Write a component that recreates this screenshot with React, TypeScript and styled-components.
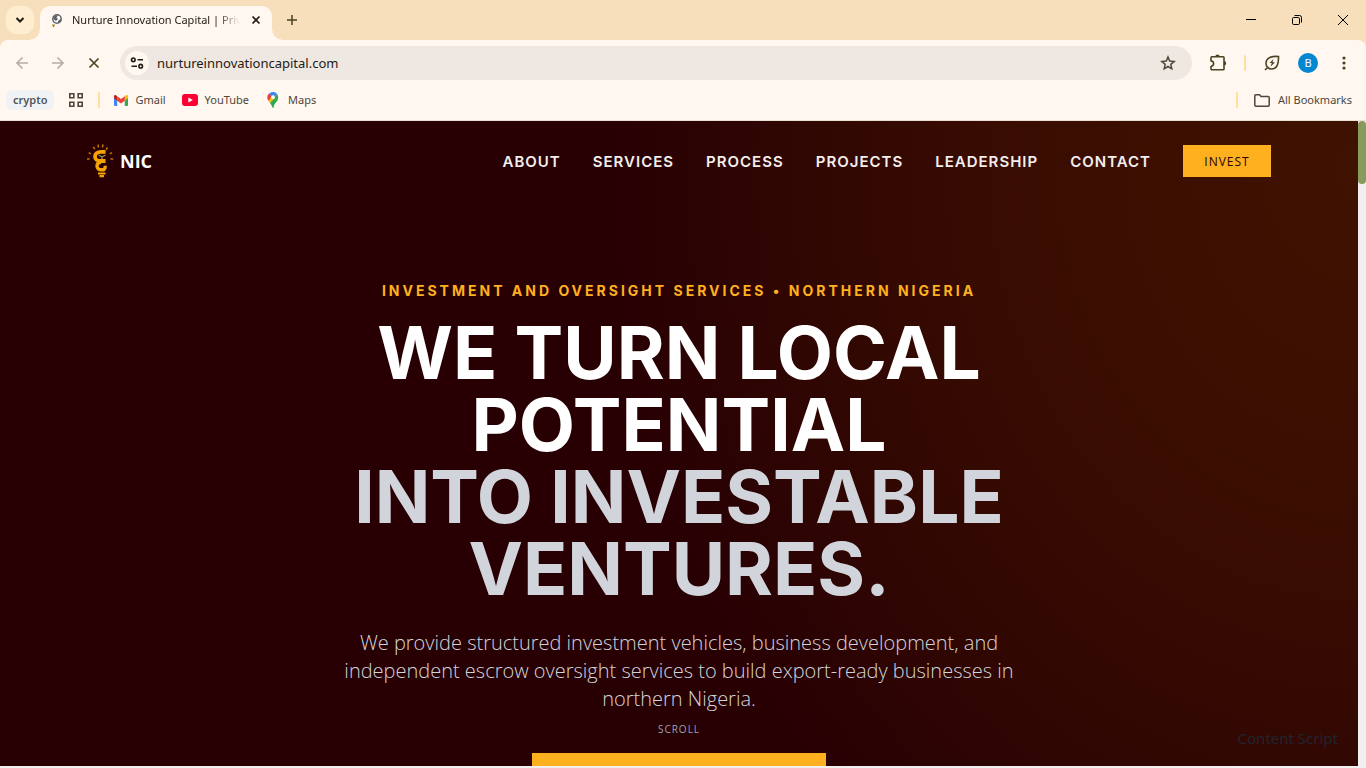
import React from "react";
import styled, { createGlobalStyle } from "styled-components";

const ui = `"Noto Sans", "Open Sans", sans-serif`;
const body = `"Open Sans", "Noto Sans", sans-serif`;
const display = `Inter, "Liberation Sans", sans-serif`;
const amber = "#ffb01f";

const GlobalStyle = createGlobalStyle`
  * { box-sizing: border-box; }
  html, body, #root { height: 100%; margin: 0; }
  body { overflow: hidden; font-family: ${ui}; font-size: 11px; }
  button, input { font: inherit; color: inherit; border: 0; padding: 0; margin: 0; background: none; }
  a { color: inherit; text-decoration: none; }
  svg { display: block; flex: none; }
`;

const Window = styled.div`
  height: 100vh;
  display: flex;
  flex-direction: column;
  background: #f6dfba;
`;

const TabStrip = styled.div`
  flex: none;
  height: 40px;
  display: flex;
  align-items: flex-end;
  padding-left: 6px;
`;

const TabSearch = styled.button`
  width: 28px;
  height: 28px;
  margin: 0 6px 6px 0;
  border-radius: 10px;
  background: #ffedd0;
  display: grid;
  place-items: center;
`;

const Tab = styled.div`
  position: relative;
  width: 232px;
  height: 34px;
  padding: 0 10px 6px;
  border-radius: 10px 10px 0 0;
  background: #fff7f0;
  display: flex;
  align-items: center;
  &::before, &::after {
    content: "";
    position: absolute;
    bottom: 0;
    width: 10px;
    height: 10px;
  }
  &::before { right: 100%; background: radial-gradient(circle at 0 0, transparent 9px, #fff7f0 10px); }
  &::after { left: 100%; background: radial-gradient(circle at 100% 0, transparent 9px, #fff7f0 10px); }
`;

const TabTitle = styled.span`
  flex: 1;
  margin: 0 8px;
  overflow: hidden;
  white-space: nowrap;
  font-size: 11px;
  line-height: 20px;
  color: #1f1b16;
  mask-image: linear-gradient(to right, #000 145px, transparent 168px);
`;

const PlainButton = styled.button<{ $w?: number; $h?: number }>`
  flex: none;
  width: ${(p) => p.$w ?? 36}px;
  height: ${(p) => p.$h ?? 34}px;
  display: grid;
  place-items: center;
`;

const NewTab = styled(PlainButton)`
  margin: 0 auto 3px 2px;
`;

const ToolArea = styled.div`
  flex: none;
  background: #fff7f0;
  border-radius: 8px 8px 0 0;
  border-bottom: 1px solid #eadfd4;
`;

const Toolbar = styled.div`
  height: 46px;
  display: flex;
  align-items: center;
  padding: 0 4px;
`;

const Omnibox = styled.form`
  flex: 1;
  height: 34px;
  margin: 0 8px;
  padding: 0 6px 0 5px;
  border-radius: 17px;
  background: #efe7e1;
  display: flex;
  align-items: center;
`;

const SiteInfo = styled.button`
  width: 24px;
  height: 24px;
  border-radius: 50%;
  background: #fff7f0;
  display: grid;
  place-items: center;
`;

const Address = styled.input`
  flex: 1;
  min-width: 0;
  margin-left: 8px;
  font-family: ${ui};
  font-size: 13px;
  line-height: 20px;
  color: #1f1b16;
  outline: 0;
`;

const Divider = styled.span<{ $gap: number }>`
  width: 2px;
  height: 16px;
  margin: 0 ${(p) => p.$gap}px;
  border-radius: 1px;
  background: #ffdf9c;
`;

const Avatar = styled.span`
  width: 20px;
  height: 20px;
  border-radius: 50%;
  background: #0288d1;
  color: #fff;
  font-size: 11px;
  line-height: 20px;
  text-align: center;
`;

const Bookmarks = styled.nav`
  height: 34px;
  padding: 0 14px 6px 6px;
  display: flex;
  align-items: center;
  color: #4d4639;
`;

const Group = styled.button`
  height: 20px;
  padding: 0 7px;
  margin-right: 14px;
  border-radius: 6px;
  background: #f0f2f4;
  color: #50565c;
  font-size: 11px;
  font-weight: 600;
  line-height: 20px;
`;

const Bookmark = styled.a`
  display: flex;
  align-items: center;
  gap: 7px;
  margin-right: 16px;
  line-height: 20px;
`;

const Folder = styled(Bookmark).attrs({ as: "button" })`
  margin: 0;
  gap: 8px;
`;

const Fill = styled.span`
  flex: 1;
`;

const Viewport = styled.div`
  flex: 1;
  min-height: 0;
  display: flex;
  padding-bottom: 2px;
  background: #f0f0f0;
`;

const Page = styled.div`
  position: relative;
  flex: 1;
  min-width: 0;
  overflow: hidden;
  background: radial-gradient(ellipse 760px 880px at 100% 8%, #401200 0%, #390c02 48%, #2f0602 76%, #280004 100%);
  font-family: ${body};
`;

const Track = styled.div`
  flex: none;
  width: 8px;
`;

const Thumb = styled.div`
  height: 63px;
  border-radius: 4px;
  background: #889b5c;
`;

const Header = styled.header`
  max-width: 1280px;
  height: 80px;
  margin: 0 auto;
  padding: 0 48px;
  display: flex;
  align-items: center;
  justify-content: space-between;
`;

const Brand = styled.a`
  display: flex;
  align-items: center;
  gap: 6px;
  color: #fff;
  font-size: 18px;
  font-weight: 700;
  line-height: 28px;
`;

const Menu = styled.nav`
  display: flex;
  align-items: center;
  gap: 32px;
  font-family: ${display};
  font-size: 15px;
  font-weight: 600;
  letter-spacing: 1px;
  color: #f3eeec;
`;

const Invest = styled.button`
  width: 88px;
  height: 32px;
  background: ${amber};
  color: #280004;
  font-family: ${body};
  font-size: 12px;
  font-weight: 500;
  letter-spacing: 1px;
`;

const Hero = styled.main`
  max-width: 896px;
  margin: 0 auto;
  padding-top: 80px;
  display: flex;
  flex-direction: column;
  align-items: center;
  text-align: center;
`;

const Eyebrow = styled.p`
  margin: 0 0 16px;
  font-family: ${display};
  font-size: 14px;
  font-weight: 700;
  line-height: 20px;
  letter-spacing: 3px;
  color: ${amber};
`;

const Headline = styled.h1`
  margin: 0 0 24px;
  font-family: ${display};
  font-size: 73px;
  font-weight: 700;
  line-height: 72px;
  color: #fff;
`;

const Muted = styled.span`
  color: #d1d5db;
`;

const Lead = styled.p`
  max-width: 672px;
  margin: 0 0 40px;
  font-size: 20px;
  font-weight: 300;
  line-height: 28px;
  color: #d1d5db;
`;

const Cta = styled.button`
  width: 294px;
  height: 56px;
  flex: none;
  background: ${amber};
`;

const ScrollHint = styled.span`
  position: absolute;
  left: 0;
  right: 0;
  bottom: 29px;
  text-align: center;
  font-size: 10px;
  line-height: 16px;
  letter-spacing: 1px;
  color: #9ca3af;
`;

const ScriptTag = styled.span`
  position: absolute;
  right: 20px;
  bottom: 16px;
  font-family: ${ui};
  font-size: 15px;
  line-height: 24px;
  color: #1f2430;
`;

const stroke = (color: string, width = 2) => ({ fill: "none", stroke: color, strokeWidth: width });

const Logo = () => (
  <svg width="27" height="34" viewBox="0 0 27 34" aria-hidden="true">
    <path d="M18.500 7.800H13.800C10.300 7.800 8 10 8 12.500S10 17 13 17H18.500" {...stroke("#f5a300", 3.800)} />
    <path d="M14 18C11.300 18.300 10 20 10 22s1.500 3.800 4.500 3.800h2.200c1.200-.8 1.600-2 1.600-4" {...stroke("#f5a300", 3.400)} />
    <path d="M11 28.500h7.500v2H11zM12.500 31h4.500v2.300h-4.500z" fill="#f5a300" />
    <path d="M15 15v-3M15 13l-3.300-2M15 13l3.500-2" {...stroke("#8b8f5a", 1.400)} />
    <path d="M11 .5l.6 3M16 .5l-.6 3M6.300 3l1.500 2.200M20.600 3.500L19 5.700M1.700 8.700l2.200 1.200M25 8.700l-2.200 1.200M0 15h2.700M23.500 15h2.700" {...stroke("#b97800", 1.500)} />
  </svg>
);

const menu = ["About", "Services", "Process", "Projects", "Leadership", "Contact"];

export default function App() {
  return (
    <Window>
      <GlobalStyle />
      <TabStrip>
        <TabSearch aria-label="Search tabs">
          <svg width="10" height="8" viewBox="0 0 10 8"><path d="M1.500 2l3.500 3.500L8.500 2" {...stroke("#1f1b16")} /></svg>
        </TabSearch>
        <Tab>
          <svg width="14" height="14" viewBox="0 0 14 14">
            <circle cx="7" cy="6" r="4.200" fill="#fff" stroke="#5f6368" strokeWidth="1.500" />
            <path d="M3 5c1-2 3-3 5-2.500L6.500 4.500 8 6 6 8 4.500 7zM8 8l2.500-2 1 .5-1.500 3-2 .5z" fill="#5f6368" />
            <path d="M2 11.500h3L4 14H3z" fill="#a87a10" />
          </svg>
          <TabTitle>Nurture Innovation Capital | Private</TabTitle>
          <PlainButton $w={12} $h={16} aria-label="Close tab">
            <svg width="10" height="10" viewBox="0 0 10 10"><path d="M1.500 1.500l7 7M8.500 1.500l-7 7" {...stroke("#1f1b16", 1.700)} /></svg>
          </PlainButton>
        </Tab>
        <NewTab aria-label="New tab">
          <svg width="12" height="12" viewBox="0 0 12 12"><path d="M6 1v10M1 6h10" {...stroke("#4d4322", 1.500)} /></svg>
        </NewTab>
        <PlainButton $w={46} $h={40} aria-label="Minimize">
          <svg width="10" height="10" viewBox="0 0 10 10"><path d="M0 4.500h10" {...stroke("#000", 1)} /></svg>
        </PlainButton>
        <PlainButton $w={46} $h={40} aria-label="Restore">
          <svg width="10" height="10" viewBox="0 0 10 10"><rect x=".5" y="2.500" width="7" height="7" rx="1.200" {...stroke("#000", 1)} /><path d="M2.500.5h5a2 2 0 0 1 2 2v5" {...stroke("#000", 1)} /></svg>
        </PlainButton>
        <PlainButton $w={46} $h={40} aria-label="Close window">
          <svg width="10" height="10" viewBox="0 0 10 10"><path d="M0 0l10 10M10 0L0 10" {...stroke("#000", 1)} /></svg>
        </PlainButton>
      </TabStrip>
      <ToolArea>
        <Toolbar>
          <PlainButton aria-label="Back">
            <svg width="14" height="14" viewBox="0 0 14 14"><path d="M13 7H2M7.500 1.500L2 7l5.500 5.500" {...stroke("#b5ada4", 1.600)} /></svg>
          </PlainButton>
          <PlainButton aria-label="Forward">
            <svg width="14" height="14" viewBox="0 0 14 14"><path d="M1 7h11M6.500 1.500L12 7l-5.500 5.500" {...stroke("#b5ada4", 1.600)} /></svg>
          </PlainButton>
          <PlainButton aria-label="Stop loading">
            <svg width="12" height="12" viewBox="0 0 12 12"><path d="M1.500 1.500l9 9M10.500 1.500l-9 9" {...stroke("#4d4322", 1.700)} /></svg>
          </PlainButton>
          <Omnibox>
            <SiteInfo type="button" aria-label="View site information">
              <svg width="14" height="12" viewBox="0 0 14 12"><g {...stroke("#1f1b16", 1.600)}><circle cx="3.300" cy="2.800" r="1.800" /><path d="M7.500 2.800H13M1.500 9.200H7" /><circle cx="10.700" cy="9.200" r="1.800" /></g></svg>
            </SiteInfo>
            <Address aria-label="Address and search bar" defaultValue="nurtureinnovationcapital.com" />
            <PlainButton type="button" aria-label="Bookmark this tab">
              <svg width="16" height="16" viewBox="0 0 16 16"><path d="M8 2l1.700 4.100 4.500.4-3.400 2.900 1 4.400L8 11.500l-3.800 2.300 1-4.400L1.800 6.500l4.500-.4z" {...stroke("#4d4639", 1.500)} /></svg>
            </PlainButton>
          </Omnibox>
          <PlainButton aria-label="Extensions">
            <svg width="18" height="18" viewBox="0 0 18 18"><path d="M2 7.500V3.500q0-.8.8-.8H14.200q.8 0 .8.800V15q0 .8-.8.8H2.800q-.8 0-.8-.8v-3" {...stroke("#4d4322", 1.600)} /><path d="M2 7a2.500 2.500 0 0 1 0 5.200" {...stroke("#4d4322", 1.600)} /><path d="M6.300 2.700a2.200 2.200 0 0 1 4.400 0zM15 7a2.200 2.200 0 0 1 0 4.400z" fill="#4d4322" /></svg>
          </PlainButton>
          <Divider $gap={8} />
          <PlainButton aria-label="Energy saver">
            <svg width="16" height="16" viewBox="0 0 16 16"><path d="M14.500 1.500C8 1 2 2.500 2 8.500a5.500 5.500 0 0 0 5.500 5.500c6 0 7.200-6 7-12.500zM1 15l3-3" {...stroke("#4d4322", 1.600)} /><path d="M9.500 4L5.500 8h2.300l-1.300 3.800 4.500-4.600H8.500z" fill="#4d4322" /></svg>
          </PlainButton>
          <PlainButton aria-label="Profile"><Avatar>B</Avatar></PlainButton>
          <PlainButton aria-label="Menu">
            <svg width="4" height="14" viewBox="0 0 4 14" fill="#4d4322"><circle cx="2" cy="2" r="1.600" /><circle cx="2" cy="7" r="1.600" /><circle cx="2" cy="12" r="1.600" /></svg>
          </PlainButton>
        </Toolbar>
        <Bookmarks aria-label="Bookmarks">
          <Group>crypto</Group>
          <PlainButton $w={16} $h={20} aria-label="Apps">
            <svg width="14" height="14" viewBox="0 0 14 14"><path d="M.8.800h4v4h-4zM9.200.800h4v4h-4zM.8 9.200h4v4h-4zM9.200 9.200h4v4h-4z" {...stroke("#4d4639", 1.600)} /></svg>
          </PlainButton>
          <Divider $gap={14} />
          <Bookmark href="#gmail">
            <svg width="14" height="11" viewBox="0 0 14 11"><path d="M0 1.500V10a1 1 0 0 0 1 1h2.200V4z" fill="#4285f4" /><path d="M14 1.500V10a1 1 0 0 1-1 1h-2.200V4z" fill="#34a853" /><path d="M10.800 1.200L12 .3c.9-.6 2 0 2 1.200v1.700l-3.200 2.500z" fill="#fbbc04" /><path d="M3.200 1.200L2 .3C1.100-.3 0 .3 0 1.500v1.700l3.200 2.500z" fill="#c5221f" /><path d="M3.200 1.200L7 4.100l3.800-2.900v4.500L7 8.600 3.200 5.700z" fill="#ea4335" /></svg>
            Gmail
          </Bookmark>
          <Bookmark href="#youtube">
            <svg width="16" height="12" viewBox="0 0 16 12"><rect width="16" height="12" rx="3" fill="#ff0033" /><path d="M6.300 3.400v5.200L10.800 6z" fill="#fff" /></svg>
            YouTube
          </Bookmark>
          <Bookmark href="#maps">
            <svg width="16" height="16" viewBox="0 0 16 16">
              <path d="M4 2.500A5.200 5.200 0 0 1 8 0l-.5 4.500L4 8z" fill="#4285f4" />
              <path d="M4 1.500L7.500 4.500 3.500 9A6 6 0 0 1 4 1.500z" fill="#ea4335" />
              <path d="M6 .4A5.300 5.300 0 0 1 12.300 2.300L8.500 6 4 1.800z" fill="#4285f4" />
              <path d="M12.300 2.300c1.500 2.200 1 5-.4 6.700L9 12.500 4 9.500z" fill="#34a853" />
              <path d="M3.500 8.500l5-5.200 1 3.500-4.500 4.500z" fill="#fbbc04" />
              <path d="M5 11.200L10 6l2.500 2c-1.500 2.500-3.500 3.500-3.800 7.300 0 .9-1.200.9-1.400 0C7 13.500 6 12.500 5 11.200z" fill="#34a853" />
              <circle cx="8" cy="5.200" r="1.900" fill="#fff" />
            </svg>
            Maps
          </Bookmark>
          <Fill />
          <Divider $gap={16} />
          <Folder>
            <svg width="16" height="13" viewBox="0 0 16 13"><path d="M.8 11.200V1.800q0-1 1-1h3.700l1.600 1.700h7.100q1 0 1 1v7.700q0 1-1 1H1.800q-1 0-1-1z" {...stroke("#4d4639", 1.500)} /></svg>
            All Bookmarks
          </Folder>
        </Bookmarks>
      </ToolArea>
      <Viewport>
        <Page>
          <Header>
            <Brand href="#home"><Logo />NIC</Brand>
            <Menu>
              {menu.map((m) => <a key={m} href={`#${m.toLowerCase()}`}>{m.toUpperCase()}</a>)}
              <Invest>INVEST</Invest>
            </Menu>
          </Header>
          <Hero>
            <Eyebrow>INVESTMENT AND OVERSIGHT SERVICES • NORTHERN NIGERIA</Eyebrow>
            <Headline>
              WE TURN LOCAL<br />POTENTIAL<br />
              <Muted>INTO INVESTABLE<br />VENTURES.</Muted>
            </Headline>
            <Lead>
              We provide structured investment vehicles, business development, and independent escrow
              oversight services to build export-ready businesses in northern Nigeria.
            </Lead>
            <Cta aria-label="Invest with us" />
          </Hero>
          <ScrollHint>SCROLL</ScrollHint>
          <ScriptTag>Content Script</ScriptTag>
        </Page>
        <Track><Thumb /></Track>
      </Viewport>
    </Window>
  );
}
